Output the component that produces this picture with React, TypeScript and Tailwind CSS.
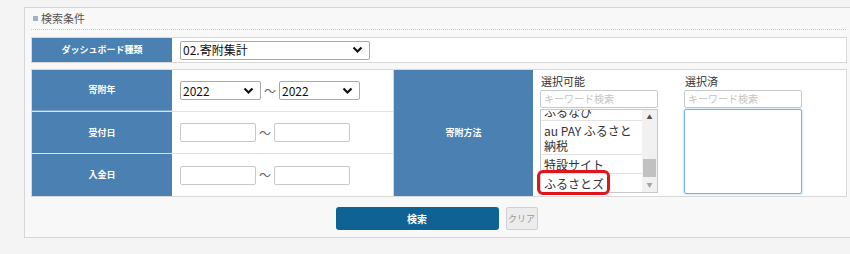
import React from "react";

const font = { fontFamily: '"Noto Sans CJK JP", "Noto Sans", sans-serif' };

const Chevron = () => (
  <svg width="11" height="8" viewBox="0 0 11 8" className="shrink-0">
    <path d="M1.5 1.5 L5.5 5.5 L9.5 1.5" fill="none" stroke="#111" strokeWidth="2.2" />
  </svg>
);

const SelectBox = ({ value, w }: { value: string; w: string }) => (
  <div
    className={`${w} h-[19px] border border-[#a9a9a9] rounded-[2px] bg-white flex items-center justify-between pl-[2px] pr-[6px] text-[12px] text-[#111]`}
  >
    <span>{value}</span>
    <Chevron />
  </div>
);

const TextBox = () => (
  <div className="w-[76px] h-[19px] border border-[#c8c8c8] rounded-[2px] bg-white" />
);

const Label = ({ text, className = "" }: { text: string; className?: string }) => (
  <div
    className={`w-[140px] bg-[#4a80b2] flex items-center justify-center text-white text-[9px] font-bold ${className}`}
  >
    {text}
  </div>
);

const listItems = ["ふるなび", "au PAY ふるさと納税", "特設サイト", "ふるさとズ"];

export default function App() {
  return (
    <div className="w-[850px] h-[254px] overflow-hidden bg-[#f4f4f4] pt-[7px] pl-[24px]" style={font}>
      <div className="w-[830px] h-[231px] border border-[#d6d6d6] bg-[#f8f8f8] pl-[6px] pr-[7px]">
        {/* title */}
        <div className="h-[22px] flex items-center gap-[3px] border-b border-dotted border-[#c8c8c8] pl-[2px] text-[11px] text-[#555]">
          <span className="w-[5px] h-[5px] bg-[#9fb3c8]" />
          <span>検索条件</span>
        </div>

        {/* dashboard type */}
        <div className="mt-[7px] h-[26px] w-[816px] flex border border-[#d8d8d8]">
          <Label text="ダッシュボード種類" />
          <div className="flex-1 bg-white flex items-center pl-[8px]">
            <SelectBox value="02.寄附集計" w="w-[190px]" />
          </div>
        </div>

        {/* main table */}
        <div className="mt-[6px] h-[128px] w-[816px] flex border border-[#d8d8d8]">
          <div className="w-[361px] flex flex-col">
            <div className="flex h-[42px] border-b border-[#e2e2e2]">
              <Label text="寄附年" className="border-b border-[#7fa6ca]" />
              <div className="flex-1 bg-white flex items-center pl-[8px] gap-[3px]">
                <SelectBox value="2022" w="w-[81px]" />
                <span className="text-[12px] text-[#666]">～</span>
                <SelectBox value="2022" w="w-[81px]" />
              </div>
            </div>
            <div className="flex h-[42px] border-b border-[#e2e2e2]">
              <Label text="受付日" />
              <div className="flex-1 bg-white flex items-center pl-[8px] gap-[3px]">
                <TextBox />
                <span className="text-[12px] text-[#666]">～</span>
                <TextBox />
              </div>
            </div>
            <div className="flex flex-1">
              <Label text="入金日" />
              <div className="flex-1 bg-white flex items-center pl-[8px] gap-[3px]">
                <TextBox />
                <span className="text-[12px] text-[#666]">～</span>
                <TextBox />
              </div>
            </div>
          </div>
          <Label text="寄附方法" className="border-l border-[#d8d8d8]" />
          <div className="flex-1 bg-white flex gap-[26px] pl-[7px] pt-[3px]">
            {/* selectable */}
            <div className="w-[118px] flex flex-col">
              <div className="text-[11px] text-[#333] h-[17px] leading-[17px] pl-[1px]">選択可能</div>
              <div className="h-[18px] border border-[#c8c8c8] rounded-[2px] text-[10px] text-[#c4c4c4] pl-[3px] leading-[16px]">
                キーワード検索
              </div>
              <div className="relative mt-[1px] h-[84px] border border-[#c8c8c8] flex">
                <div className="flex-1 overflow-hidden">
                  <div className="-mt-[8px]">
                    {listItems.map((it, i) => (
                      <div
                        key={it}
                        className={`px-[3px] pt-[2px] pb-[1px] text-[12px] leading-[15px] text-[#333] ${
                          i < listItems.length - 1 ? "border-b border-[#e2e2e2]" : ""
                        }`}
                      >
                        {it}
                      </div>
                    ))}
                  </div>
                </div>
                <div className="w-[15px] bg-[#f1f1f1] flex flex-col items-center justify-between py-[3px]">
                  <span className="text-[6px] leading-[8px] text-[#505050]">▲</span>
                  <div className="flex-1 w-full flex flex-col justify-end pb-[4px] px-[1px]">
                    <div className="h-[18px] bg-[#c1c1c1]" />
                  </div>
                  <span className="text-[6px] leading-[8px] text-[#a3a3a3]">▼</span>
                </div>
                <div className="absolute left-[-4px] top-[60px] w-[73px] h-[25px] border-[3px] border-[#e0141b] rounded-[6px]" />
              </div>
            </div>
            {/* selected */}
            <div className="w-[118px] flex flex-col">
              <div className="text-[11px] text-[#333] h-[17px] leading-[17px] pl-[1px]">選択済</div>
              <div className="h-[18px] border border-[#c8c8c8] rounded-[2px] text-[10px] text-[#c4c4c4] pl-[3px] leading-[16px]">
                キーワード検索
              </div>
              <div className="mt-[1px] h-[85px] border border-[#7fb1e0] rounded-[2px] shadow-[0_0_3px_rgba(102,175,233,0.6)] bg-white" />
            </div>
          </div>
        </div>

        {/* buttons */}
        <div className="mt-[10px] flex justify-center gap-[7px] w-[811px]">
          <button className="w-[163px] h-[23px] rounded-[3px] bg-[#0f6394] text-white text-[10px] font-bold">
            検索
          </button>
          <button className="w-[32px] h-[23px] rounded-[2px] bg-[#ececec] border border-[#d0d0d0] text-[#999] text-[9px]">
            クリア
          </button>
        </div>
      </div>
    </div>
  );
}
